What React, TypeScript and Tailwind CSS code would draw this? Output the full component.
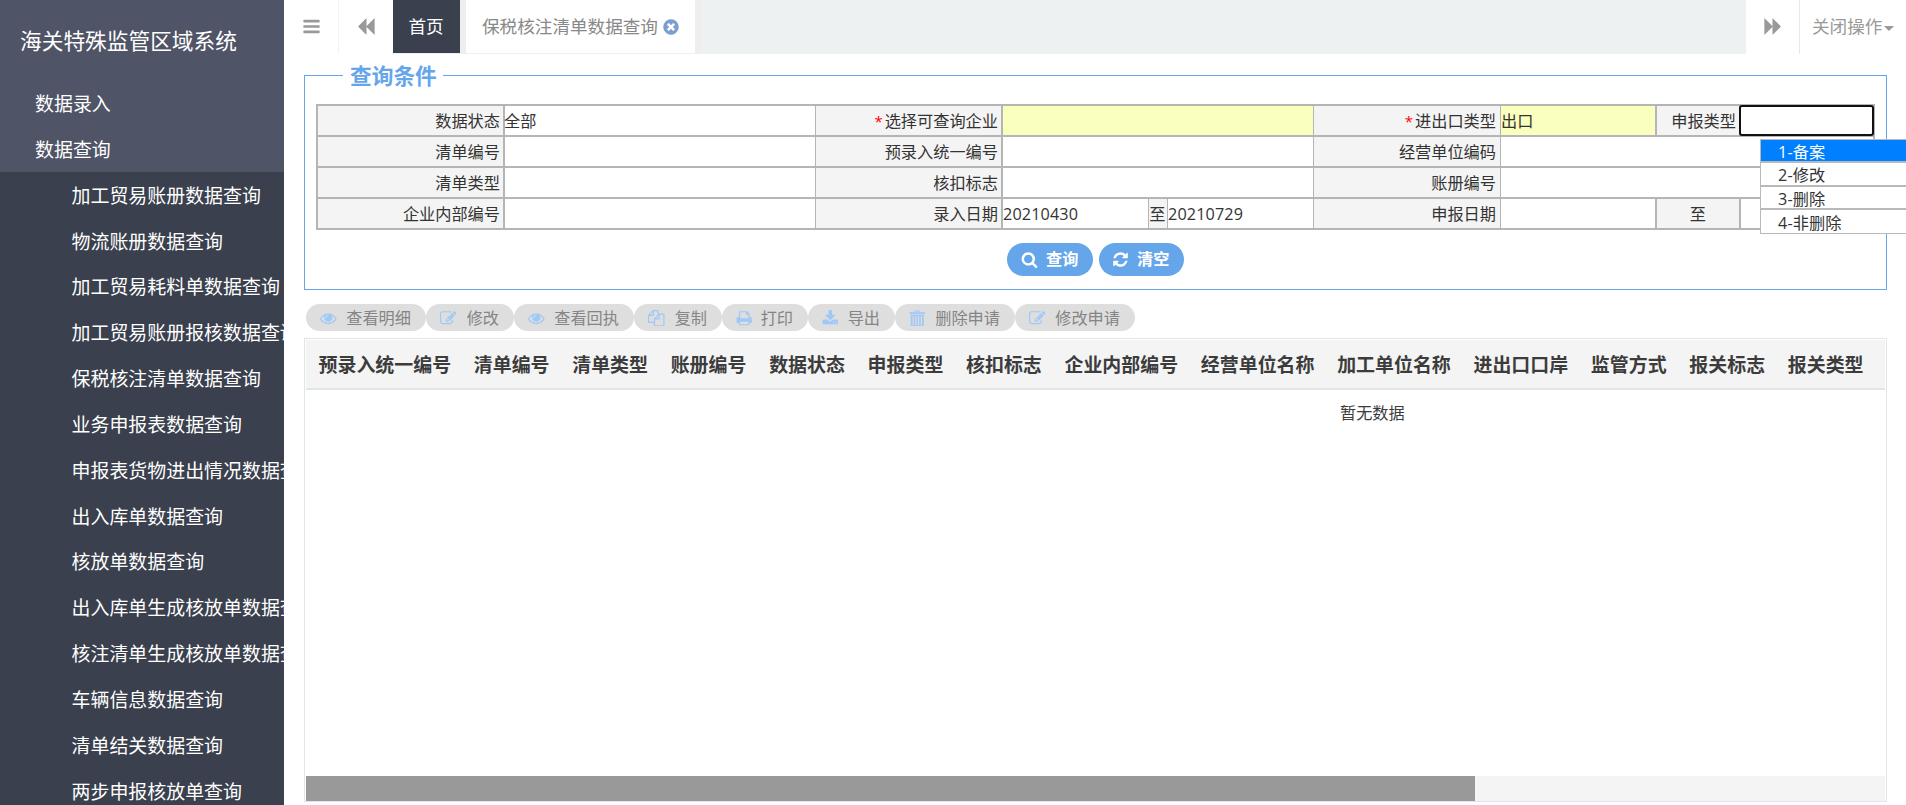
import React from 'react';

const paths = {
  bars: 'M1664 1344v128q0 26-19 45t-45 19h-1408q-26 0-45-19t-19-45v-128q0-26 19-45t45-19h1408q26 0 45 19t19 45zm0-512v128q0 26-19 45t-45 19h-1408q-26 0-45-19t-19-45v-128q0-26 19-45t45-19h1408q26 0 45 19t19 45zm0-512v128q0 26-19 45t-45 19h-1408q-26 0-45-19t-19-45v-128q0-26 19-45t45-19h1408q26 0 45 19t19 45z',
  backward: 'M1619 141q19-19 32-13t13 32v1472q0 26-13 32t-32-13l-710-710q-9-9-13-19v710q0 26-13 32t-32-13l-710-710q-19-19-19-45t19-45l710-710q19-19 32-13t13 32v710q4-10 13-19z',
  close: 'M1277 1122q0-26-19-45l-181-181 181-181q19-19 19-45 0-27-19-46l-90-90q-19-19-46-19-26 0-45 19l-181 181-181-181q-19-19-45-19-27 0-46 19l-90 90q-19 19-19 46 0 26 19 45l181 181-181 181q-19 19-19 45 0 27 19 46l90 90q19 19 46 19 26 0 45-19l181-181 181 181q19 19 45 19 27 0 46-19l90-90q19-19 19-46zm387-226q0 209-103 385.5t-279.5 279.5-385.5 103-385.5-103-279.5-279.5-103-385.5 103-385.5 279.5-279.5 385.5-103 385.5 103 279.5 279.5 103 385.5z',
  search: 'M1216 832q0-185-131.5-316.5t-316.5-131.5-316.5 131.5-131.5 316.5 131.5 316.5 316.5 131.5 316.5-131.5 131.5-316.5zm512 832q0 52-38 90t-90 38q-54 0-90-38l-343-342q-179 124-399 124-143 0-273.5-55.5t-225-150-150-225-55.5-273.5 55.5-273.5 150-225 225-150 273.5-55.5 273.5 55.5 225 150 150 225 55.5 273.5q0 220-124 399l343 343q37 37 37 90z',
  refresh: 'M1639 1056q0 5-1 7-64 268-268 434.5t-478 166.5q-146 0-282.5-55t-243.5-157l-129 129q-19 19-45 19t-45-19-19-45v-448q0-26 19-45t45-19h448q26 0 45 19t19 45-19 45l-137 137q71 66 161 102t187 36q134 0 250-65t186-179q11-17 53-117 8-23 30-23h192q13 0 22.5 9.5t9.5 22.5zm25-800v448q0 26-19 45t-45 19h-448q-26 0-45-19t-19-45 19-45l138-138q-148-137-349-137-134 0-250 65t-186 179q-11 17-53 117-8 23-30 23h-199q-13 0-22.5-9.5t-9.5-22.5v-7q65-268 270-434.5t480-166.5q146 0 284 55.5t245 156.5l130-129q19-19 45-19t45 19 19 45z',
  eye: 'M1664 960q-152-236-381-353 61 104 61 225 0 185-131.5 316.5t-316.5 131.5-316.5-131.5-131.5-316.5q0-121 61-225-229 117-381 353 133 205 333.5 326.5t434.5 121.5 434.5-121.5 333.5-326.5zm-720-384q0-20-14-34t-34-14q-125 0-214.5 89.5t-89.5 214.5q0 20 14 34t34 14 34-14 14-34q0-86 61-147t147-61q20 0 34-14t14-34zm848 384q0 34-20 69-140 230-376.5 368.5t-499.5 138.5-499.5-139-376.5-368q-20-35-20-69t20-69q140-229 376.5-368t499.5-139 499.5 139 376.5 368q20 35 20 69z',
  edit: 'M888 1184l116-116-152-152-116 116v56h96v96h56zm440-720q-16-16-33 1l-350 350q-17 17-1 33t33-1l350-350q17-17 1-33zm80 594v190q0 119-84.5 203.5t-203.5 84.5h-832q-119 0-203.5-84.5t-84.5-203.5v-832q0-119 84.5-203.5t203.5-84.5h832q63 0 117 25 15 7 18 23 3 17-9 29l-49 49q-14 14-32 8-23-6-45-6h-832q-66 0-113 47t-47 113v832q0 66 47 113t113 47h832q66 0 113-47t47-113v-126q0-13 9-22l64-64q15-15 35-7t20 29zm-96-738l288 288-672 672h-288v-288zm444 132l-92 92-288-288 92-92q28-28 68-28t68 28l152 152q28 28 28 68t-28 68z',
  copy: 'M1696 384q40 0 68 28t28 68v1216q0 40-28 68t-68 28h-960q-40 0-68-28t-28-68v-288h-544q-40 0-68-28t-28-68v-672q0-40 20-88t48-76l408-408q28-28 76-48t88-20h416q40 0 68 28t28 68v328q68-40 128-40h416zm-544 213l-299 299h299v-299zm-640-384l-299 299h299v-299zm196 647l316-316v-416h-384v416q0 40-28 68t-68 28h-416v640h512v-256q0-40 20-88t48-76zm956 804v-1152h-384v416q0 40-28 68t-68 28h-416v640h896z',
  print: 'M448 1536h896v-256h-896v256zm0-640h896v-384h-160q-40 0-68-28t-28-68v-160h-640v640zm1152 64q0-26-19-45t-45-19-45 19-19 45 19 45 45 19 45-19 19-45zm128 0v416q0 13-9.5 22.5t-22.5 9.5h-224v160q0 40-28 68t-68 28h-960q-40 0-68-28t-28-68v-160h-224q-13 0-22.5-9.5t-9.5-22.5v-416q0-79 56.5-135.5t135.5-56.5h64v-544q0-40 28-68t68-28h672q40 0 88 20t76 48l152 152q28 28 48 76t20 88v256h64q79 0 135.5 56.5t56.5 135.5z',
  download: 'M1344 1344q0-26-19-45t-45-19-45 19-19 45 19 45 45 19 45-19 19-45zm256 0q0-26-19-45t-45-19-45 19-19 45 19 45 45 19 45-19 19-45zm128-224v320q0 40-28 68t-68 28h-1472q-40 0-68-28t-28-68v-320q0-40 28-68t68-28h465l135 136q58 56 136 56t136-56l136-136h464q40 0 68 28t28 68zm-325-569q17 41-14 70l-448 448q-18 19-45 19t-45-19l-448-448q-31-29-14-70 17-39 59-39h256v-448q0-26 19-45t45-19h256q26 0 45 19t19 45v448h256q42 0 59 39z',
  trash: 'M64 256h512v-96q0-96 96-96h448q96 0 96 96v96h512v192h-1664zM640 256h512v-80h-512zM192 544h1408v1152q0 96-96 96h-1216q-96 0-96-96zM384 640v1024h128v-1024zM688 640v1024h128v-1024zM976 640v1024h128v-1024zM1280 640v1024h128v-1024z',
};

type IconName = keyof typeof paths;

const Icon: React.FC<{ name: IconName; className?: string }> = ({ name, className }) => (
  <svg viewBox="0 0 1792 1792" fill="currentColor" fillRule={name === 'trash' ? 'evenodd' : 'nonzero'} className={className}>
    <path d={paths[name]} />
  </svg>
);

const menu = [
  '加工贸易账册数据查询',
  '物流账册数据查询',
  '加工贸易耗料单数据查询',
  '加工贸易账册报核数据查询',
  '保税核注清单数据查询',
  '业务申报表数据查询',
  '申报表货物进出情况数据查询',
  '出入库单数据查询',
  '核放单数据查询',
  '出入库单生成核放单数据查询',
  '核注清单生成核放单数据查询',
  '车辆信息数据查询',
  '清单结关数据查询',
  '两步申报核放单查询',
];

const tools: { icon: IconName; text: string; width: string }[] = [
  { icon: 'eye', text: '查看明细', width: 'w-[120px]' },
  { icon: 'edit', text: '修改', width: 'w-[88px]' },
  { icon: 'eye', text: '查看回执', width: 'w-[120px]' },
  { icon: 'copy', text: '复制', width: 'w-[88px]' },
  { icon: 'print', text: '打印', width: 'w-[86px]' },
  { icon: 'download', text: '导出', width: 'w-[87px]' },
  { icon: 'trash', text: '删除申请', width: 'w-[120px]' },
  { icon: 'edit', text: '修改申请', width: 'w-[120px]' },
];

const columns = [
  '预录入统一编号', '清单编号', '清单类型', '账册编号', '数据状态', '申报类型', '核扣标志',
  '企业内部编号', '经营单位名称', '加工单位名称', '进出口口岸', '监管方式', '报关标志', '报关类型',
];

const options = ['1-备案', '2-修改', '3-删除', '4-非删除'];

const Label: React.FC<{ width: string; required?: boolean; children: React.ReactNode }> = ({ width, required, children }) => (
  <div className={`${width} shrink-0 bg-[#f4f4f4] border-[#b5b5b5] pt-0.5 flex items-center justify-end`}>
    {required && <span className="text-[#f00] text-[15px] mr-0.5">*</span>}
    {children}
  </div>
);

const Field: React.FC<{ width: string; children?: React.ReactNode }> = ({ width, children }) => (
  <div className={`${width} shrink-0 border-[#b5b5b5] pt-0.5 flex items-center`}>{children}</div>
);

const Row: React.FC<{ children: React.ReactNode }> = ({ children }) => (
  <div className="flex h-[31px] border-b-2 border-[#b5b5b5]">{children}</div>
);

const L1 = 'w-[187px] border-r-2 pr-[3px]';
const L2 = 'w-[187px] border-r-2 pr-[3px]';
const L3 = 'w-[187px] border-r pr-[4px]';
const V = 'w-[311px] border-r';

const Sidebar = () => (
  <aside className="w-[284px] shrink-0 h-full bg-[#3a404d] text-white overflow-hidden whitespace-nowrap">
    <div className="h-[172px] bg-[#4f5467]">
      <div className="h-[80.3px] pl-5 pt-[3px] flex items-center text-[21.7px]">海关特殊监管区域系统</div>
      <div className="h-[45.85px] pl-[35px] pt-0.5 flex items-center text-[18.95px]">数据录入</div>
      <div className="h-[45.85px] pl-[35px] pt-0.5 flex items-center text-[18.95px]">数据查询</div>
    </div>
    {menu.map((item) => (
      <div key={item} className="h-[45.85px] pl-[71.5px] pt-0.5 flex items-center text-[18.95px]">{item}</div>
    ))}
  </aside>
);

const TabBar = () => (
  <header className="h-[54px] flex bg-[#edf1f2] text-[#999] text-[17.6px] whitespace-nowrap">
    <div className="w-[55px] bg-white border-r border-[#f3f3f3] flex items-center pl-[18px] pb-px">
      <Icon name="bars" className="w-[19px] h-[19px]" />
    </div>
    <div className="w-[54px] bg-white flex items-center pl-[18px] pb-px">
      <Icon name="backward" className="w-[19px] h-[19px]" />
    </div>
    <div className="w-[67px] h-[53px] bg-[#3a404d] text-white flex items-center justify-center pr-px">首页</div>
    <div className="w-[241px] h-[53px] bg-white border-x-[6px] border-[#eee] flex items-center pl-4 text-[#888]">
      保税核注清单数据查询
      <Icon name="close" className="w-[18px] h-[18px] ml-1 text-[#7ba0d0]" />
    </div>
    <div className="flex-1" />
    <div className="w-[54px] bg-white border-r border-[#e8e8e8] flex items-center pl-[17px] pb-px">
      <Icon name="backward" className="w-[19px] h-[19px] -scale-x-100" />
    </div>
    <div className="w-[106px] bg-white flex items-center pl-3 pb-0.5">
      关闭操作
      <span className="ml-0.5 mt-[5px] border-x-[5.5px] border-t-[5.5px] border-x-transparent border-t-[#999]" />
    </div>
  </header>
);

const QueryForm = () => (
  <fieldset className="h-[229px] mt-[7px] border border-[#65a5ea] text-[16.2px] text-[#333]">
    <legend className="ml-[38px] w-[100px] h-[29px] pl-[7px] pt-0.5 flex items-center text-[21.7px] font-bold text-[#65a5ea] whitespace-nowrap">查询条件</legend>
    <div className="relative mt-[14px] ml-[11px] w-[1559px] border-2 border-b-0 border-[#b5b5b5]">
      <Row>
        <Label width={L1}>数据状态</Label>
        <Field width={V}><span className="-ml-px">全部</span></Field>
        <Label width={L2} required>选择可查询企业</Label>
        <Field width="w-[311px] border-r bg-[#faffbd]" />
        <Label width={L3} required>进出口类型</Label>
        <Field width="w-[156px] border-r-2 bg-[#faffbd]">出口</Field>
        <Label width="w-[84px] border-r-2 pr-[3px]">申报类型</Label>
        <Field width="w-[132px]" />
      </Row>
      <Row>
        <Label width={L1}>清单编号</Label>
        <Field width={V} />
        <Label width={L2}>预录入统一编号</Label>
        <Field width={V} />
        <Label width={L3}>经营单位编码</Label>
        <Field width="w-[372px]" />
      </Row>
      <Row>
        <Label width={L1}>清单类型</Label>
        <Field width={V} />
        <Label width={L2}>核扣标志</Label>
        <Field width={V} />
        <Label width={L3}>账册编号</Label>
        <Field width="w-[372px]" />
      </Row>
      <Row>
        <Label width={L1}>企业内部编号</Label>
        <Field width={V} />
        <Label width={L2}>录入日期</Label>
        <Field width="w-[146px] border-r tracking-[0.13px]">20210430</Field>
        <Label width="w-[19px] border-r pr-[1.5px]">至</Label>
        <Field width="w-[146px] border-r tracking-[0.13px]">20210729</Field>
        <Label width={L3}>申报日期</Label>
        <Field width="w-[156px] border-r-2" />
        <Label width="w-[84px] border-r-2 pr-[33px]">至</Label>
        <Field width="w-[132px]" />
      </Row>

      {/* Focused input ring and its suggestion list */}
      <div className="absolute left-[1421px] -top-px w-[135px] h-[31px] rounded-[3px] border-2 border-[#111] bg-white" />
      <ul className="absolute left-[1442px] top-[33px] w-[146px] border-l border-y border-[#b9b9b9] bg-white">
        {options.map((option, i) => (
          <li
            key={option}
            className={`h-[23.3px] pl-[17px] pt-[3px] flex items-center tracking-[0.13px] border-[#b9b9b9] ${i < 3 ? 'border-b-2' : ''} ${i === 0 ? 'bg-[#007fff] text-white' : ''}`}
          >
            {option}
          </li>
        ))}
      </ul>
    </div>
    <div className="mt-[13px] pl-[702px] flex gap-[6px] text-white font-bold">
      <button className="w-[86px] h-[33px] rounded-full bg-[#65a5ea] flex items-center pl-[14px]">
        <Icon name="search" className="w-[17px] h-[17px] mr-2" />查询
      </button>
      <button className="w-[85px] h-[33px] rounded-full bg-[#65a5ea] flex items-center pl-[13px]">
        <Icon name="refresh" className="w-[17px] h-[17px] mr-2" />清空
      </button>
    </div>
  </fieldset>
);

const ResultTable = () => (
  <div className="mt-[7px] h-[464px] border border-[#e0e6e8] p-px pb-0 flex flex-col text-[#3c3c3c]">
    <div className="h-[50px] bg-[#f4f4f4] border-b-2 border-[#e0e6e8] flex items-center pl-[12.5px] pt-0.5 gap-[22.7px] text-[18.95px] font-bold whitespace-nowrap">
      {columns.map((column) => (
        <span key={column}>{column}</span>
      ))}
    </div>
    <div className="flex-1 pt-[11px] pl-[1034px] text-[16.2px]">暂无数据</div>
    <div className="h-[25px] bg-[#f4f4f4]">
      <div className="w-[1169px] h-full bg-[#999]" />
    </div>
  </div>
);

const App: React.FC = () => {
  return (
    <div className="w-[1906px] h-[805px] flex overflow-hidden bg-white font-['Open_Sans','Noto_Sans_CJK_SC',sans-serif]">
      <Sidebar />
      <main className="flex-1 min-w-0">
        <TabBar />
        <div className="pl-5 pr-[19px]">
          <QueryForm />
          <div className="mt-[14px] ml-[2px] flex text-[16.2px] text-[#858585]">
            {tools.map((tool) => (
              <button key={tool.text} className={`${tool.width} h-[27px] shrink-0 rounded-full bg-[#dedede] flex items-center justify-between pl-[14px] pr-[15px] pt-px whitespace-nowrap`}>
                <Icon name={tool.icon} className="w-[16.5px] h-[16.5px] text-[#9fc8f6]" />
                {tool.text}
              </button>
            ))}
          </div>
          <ResultTable />
        </div>
      </main>
    </div>
  );
};

export default App;
